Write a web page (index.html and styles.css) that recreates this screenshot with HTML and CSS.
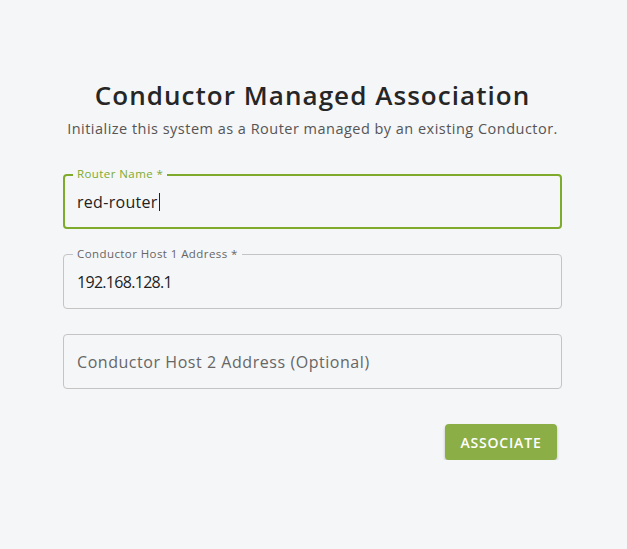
FILE: index.html
```html
<!DOCTYPE html>
<html>
<head>
<meta charset="utf-8">
<link rel="stylesheet" href="styles.css">
</head>
<body>
<main class="panel">
  <h1 class="title">Conductor Managed Association</h1>
  <p class="subtitle">Initialize this system as a Router managed by an existing Conductor.</p>
  <form class="form">
    <div class="field field-focused">
      <span class="field-label">Router Name *</span>
      <div class="field-value">red-router<span class="caret"></span></div>
    </div>
    <div class="field">
      <span class="field-label">Conductor Host 1 Address *</span>
      <div class="field-value digits">192.168.128.1</div>
    </div>
    <div class="field">
      <div class="field-value placeholder">Conductor Host 2 Address (Optional)</div>
    </div>
    <div class="actions">
      <button type="button" class="btn">ASSOCIATE</button>
    </div>
  </form>
</main>
</body>
</html>
```
FILE: styles.css
```css
html, body {
  margin: 0;
  padding: 0;
  background: #f5f6f8;
}
body {
  font-family: "Open Sans", "DejaVu Sans", sans-serif;
  color: #222;
}
.panel {
  width: 499px;
  margin: 0 0 0 63px;
  padding-top: 77px;
  display: flex;
  flex-direction: column;
  align-items: center;
}
.title {
  margin: 0;
  font-size: 26px;
  font-weight: 600;
  line-height: 36px;
  letter-spacing: 1.05px;
  color: #262626;
  white-space: nowrap;
}
.subtitle {
  margin: 6px 0 0;
  font-size: 14.5px;
  line-height: 20px;
  letter-spacing: 0.48px;
  color: #555;
  white-space: nowrap;
}
.form {
  width: 100%;
  margin-top: 35px;
  display: flex;
  flex-direction: column;
  gap: 25px;
}
.field {
  position: relative;
  height: 55px;
  box-sizing: border-box;
  border: 1px solid #c4c4c4;
  border-radius: 4px;
  padding: 0 13px;
  display: flex;
  align-items: center;
}
.field-focused {
  border: 2px solid #7eab2c;
  padding: 0 12px;
}
.field-label {
  position: absolute;
  top: -9px;
  left: 9px;
  padding: 0 4px;
  background: #f5f6f8;
  font-size: 11.5px;
  line-height: 16px;
  letter-spacing: 0.42px;
  color: #666;
  white-space: nowrap;
}
.field-focused .field-label {
  top: -10px;
  left: 8px;
  color: #7eab2c;
}
.field-value {
  font-size: 16px;
  line-height: 22px;
  letter-spacing: 0.3px;
  color: #222;
  display: flex;
  align-items: center;
}
.digits {
  letter-spacing: -0.7px;
}
.placeholder {
  color: #666;
  letter-spacing: 0.55px;
}
.caret {
  display: inline-block;
  width: 1px;
  height: 18px;
  background: #222;
  margin-left: 1px;
}
.actions {
  display: flex;
  justify-content: flex-end;
  padding-right: 5px;
  margin-top: 10px;
}
.btn {
  width: 112px;
  height: 36px;
  border: none;
  border-radius: 4px;
  background: #8cae46;
  color: #fff;
  font-family: "Open Sans", "DejaVu Sans", sans-serif;
  font-size: 14px;
  font-weight: 600;
  letter-spacing: 0.8px;
  box-shadow: 0 2px 3px rgba(0,0,0,0.25);
  cursor: pointer;
}
```
